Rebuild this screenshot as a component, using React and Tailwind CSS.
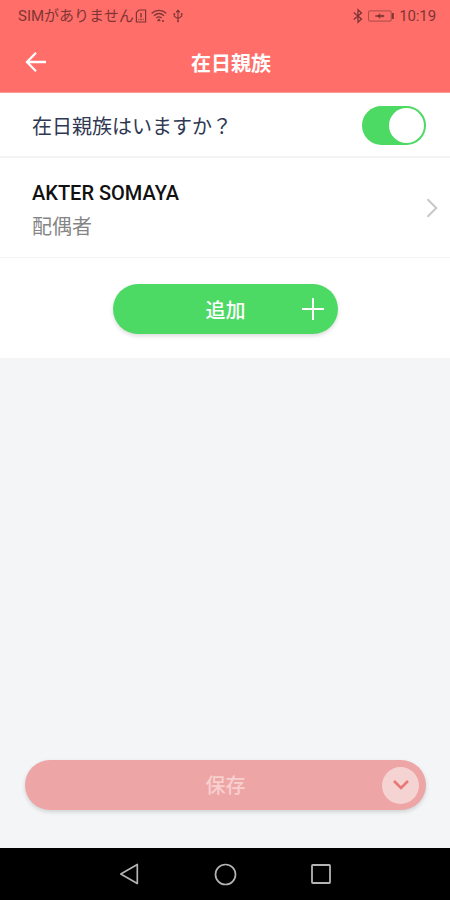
import React from 'react';

const StatusBar = () => (
    <div className="flex h-8 items-center justify-between pl-[18px] pr-[14px] text-[#7f3535]">
        <div className="flex items-center">
            <span className="text-[15px] leading-5">SIM</span>
            <span className="text-[15px] leading-5">がありません</span>
            <svg className="ml-px h-[14px] w-3" viewBox="0 0 12 14" fill="none" stroke="currentColor" strokeWidth="1.2">
                <path d="M3.8 1H10.6V13H1.4V3.6Z" />
                <path d="M6 4V8.4M6 9.8V11.2" strokeWidth="1.4" />
                <path d="M3.7 9.8V11.2M8.3 9.8V11.2" strokeWidth=".8" />
            </svg>
            <svg className="ml-1 h-[14px] w-4" viewBox="0 0 16 14" fill="none" stroke="currentColor" strokeWidth="1.3">
                <path d="M.7 4.2C5 .3 11 .3 15.3 4.2M3 6.7C6 4.1 10 4.1 13 6.7M5.3 9C7 7.6 9 7.6 10.7 9" />
                <path d="M6.5 12L8 10.5L9.2 12M11 12H13" />
            </svg>
            <svg className="ml-[6px] h-[14px] w-[10px]" viewBox="0 0 10 14" fill="none" stroke="currentColor" strokeWidth="1.1">
                <path d="M5 1.5V12M3.2 3.4L5 1.2L6.8 3.4M1.3 5V7.4L5 9.6L8.7 7.2V5" />
                <path d="M.5 5H2.2M7.8 5H9.5M4.2 12.4H5.8" strokeWidth="1.6" />
            </svg>
        </div>
        <div className="flex items-center">
            <svg className="h-4 w-[10px]" viewBox="0 0 10 16" fill="none" stroke="currentColor" strokeWidth="1.3">
                <path d="M.8 4.5L8.5 11L5 14.3V1.7L8.5 5L.8 11.5" />
            </svg>
            <svg className="ml-[5px] h-3 w-[26px]" viewBox="0 0 26 12" fill="none">
                <rect x=".6" y=".9" width="22.6" height="10.2" rx="1" stroke="currentColor" strokeOpacity=".65" />
                <path d="M7 6L10.5 5.1L12 3.6V5.3H16V6.7H12V8.4L10.5 6.9Z" fill="currentColor" stroke="currentColor" strokeWidth=".5" />
                <path d="M24.8 3V9" stroke="currentColor" strokeWidth="2" />
            </svg>
            <span className="ml-[5px] text-[15px] leading-5 tracking-[-0.1px]">10:19</span>
        </div>
    </div>
);

const Header = () => (
    <header className="h-[93px] bg-[#ff6e69] border-b border-[#ff9b97]">
        <StatusBar />
        <div className="grid h-[60px] grid-cols-[1fr_auto_1fr] items-center">
            <button className="ml-[25px] w-[22px]" aria-label="戻る">
                <svg className="h-[22px] w-[22px]" viewBox="0 0 22 22" fill="none" stroke="#fff" strokeWidth="2.3">
                    <path d="M21 11H2.5M11 1.8L2 11L11 20.2" />
                </svg>
            </button>
            <h1 className="pl-[12px] pt-[3px] text-[20px] font-bold text-white">在日親族</h1>
        </div>
    </header>
);

const NavBar = () => (
    <nav className="flex h-[52px] items-center bg-black pl-[119px]">
        <svg className="h-[22px] w-5" viewBox="0 0 20 22" fill="none" stroke="#b4b4b4" strokeWidth="1.7" strokeLinejoin="round">
            <path d="M18.3 1.5V20.5L1.8 11Z" />
        </svg>
        <svg className="ml-[75px] h-[23px] w-[23px]" viewBox="0 0 23 23" fill="none" stroke="#b4b4b4" strokeWidth="1.7">
            <circle cx="11.5" cy="11.5" r="10" />
        </svg>
        <svg className="ml-[74px] h-5 w-5" viewBox="0 0 20 20" fill="none" stroke="#b4b4b4" strokeWidth="1.8">
            <rect x="1" y="1" width="18" height="18" rx=".7" />
        </svg>
    </nav>
);

export default function App() {
    return (
        <div className="flex h-[900px] w-[450px] flex-col overflow-hidden bg-[#f3f5f7] font-[Roboto,'Noto_Sans_CJK_JP',sans-serif]">
            <Header />

            <section className="h-[265px] bg-white">
                <div className="flex h-[65px] items-center justify-between border-b-2 border-[#f2f3f4] pl-8 pr-6">
                    <span className="pt-[4px] text-[20px] text-[#2f3852]">在日親族はいますか？</span>
                    <button className="mt-px flex h-[39px] w-16 items-center justify-end rounded-full bg-[#4cd964] pr-[2px]" aria-label="在日親族">
                        <span className="h-[35px] w-[35px] rounded-full bg-white" />
                    </button>
                </div>

                <div className="flex h-[100px] items-center justify-between border-b border-[#f4f4f5] pl-8 pr-[12px]">
                    <div className="pt-[5px]">
                        <p className="text-[20px] font-medium leading-[33px] text-[#111]">AKTER SOMAYA</p>
                        <p className="pt-px text-[20px] leading-[33px] text-[#858585]">配偶者</p>
                    </div>
                    <svg className="mt-px h-5 w-3" viewBox="0 0 12 20" fill="none" stroke="#c7c7cb" strokeWidth="2">
                        <path d="M1.5 1.2L10.3 10L1.5 18.8" />
                    </svg>
                </div>

                <button className="mx-auto mt-[26px] grid h-[50px] w-[225px] grid-cols-[1fr_auto_1fr] items-center rounded-full bg-[#4cd964] shadow-[0_2px_4px_rgba(0,0,0,0.15)]">
                    <span />
                    <span className="pl-px pt-[3px] text-[20px] font-medium text-white">追加</span>
                    <svg className="mr-[14px] h-[22px] w-[22px] justify-self-end" viewBox="0 0 22 22" stroke="#fff" strokeWidth="2">
                        <path d="M11 0V22M0 11H22" />
                    </svg>
                </button>
            </section>

            <div className="flex flex-1 flex-col justify-end px-[25px] pb-[38px]">
                <button className="grid h-[50px] w-[401px] grid-cols-[1fr_auto_1fr] items-center rounded-full bg-[#eea5a5] shadow-[0_2px_4px_rgba(0,0,0,0.15)]">
                    <span />
                    <span className="pt-[2px] text-[20px] font-medium text-[#f8d0d0]">保存</span>
                    <span className="mr-[7px] flex h-[37px] w-[37px] items-center justify-center justify-self-end rounded-full bg-[#f6d3d3]">
                        <svg className="h-[10px] w-4" viewBox="0 0 16 10" fill="none" stroke="#e87775" strokeWidth="2.6">
                            <path d="M1 1L8 8L15 1" />
                        </svg>
                    </span>
                </button>
            </div>

            <NavBar />
        </div>
    );
}
